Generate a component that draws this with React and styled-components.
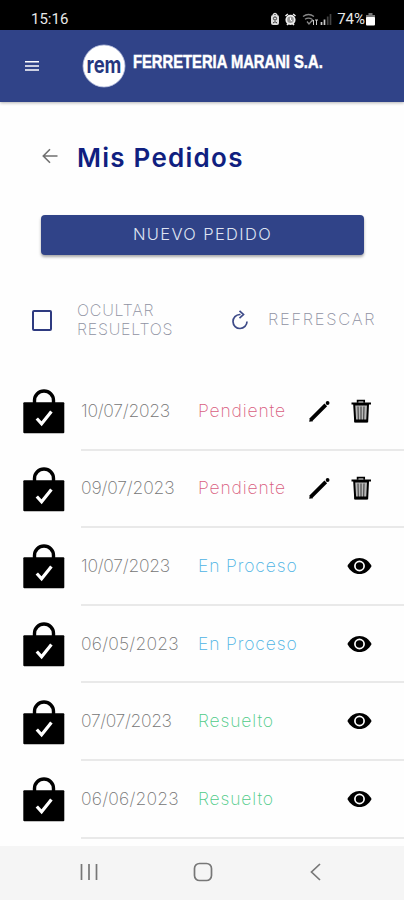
import React from 'react'
import styled, { createGlobalStyle } from 'styled-components'

const orders = [
    { id: 1, date: '10/07/2023', status: 'Pendiente', gap: '-0.25px' },
    { id: 2, date: '09/07/2023', status: 'Pendiente', gap: '-0.15px' },
    { id: 3, date: '10/07/2023', status: 'En Proceso', gap: '-0.25px' },
    { id: 4, date: '06/05/2023', status: 'En Proceso', gap: '0.2px' },
    { id: 5, date: '07/07/2023', status: 'Resuelto', gap: '-0.35px' },
    { id: 6, date: '06/06/2023', status: 'Resuelto', gap: '0.2px' },
]

const statusColors = {
    'Pendiente': '#d95f7e',
    'En Proceso': '#4db3e4',
    'Resuelto': '#4fcb88',
}

const BagIcon = () => (
    <svg width="42" height="45" viewBox="0 0 42 45">
        <path d="M11.5 15V11.5a9.5 9.5 0 0 1 19 0V15" fill="none" stroke="#000" strokeWidth="3.4" />
        <rect x="0.3" y="13.3" width="41" height="31" rx="1" fill="#000" />
        <path d="M13.8 29.5l4.8 5.3 9.8-12.3" fill="none" stroke="#fff" strokeWidth="3.2" />
    </svg>
)

const PencilIcon = () => (
    <svg width="24" height="24" viewBox="0 0 24 24">
        <path d="M3.800 20.800L18.800 5.800" stroke="#000" strokeWidth="3.800" />
        <path d="M2.200 22.800l.6-3.800 3.200 3.200z" fill="#000" />
        <circle cx="20.600" cy="4" r="1.900" fill="#000" />
    </svg>
)

const TrashIcon = () => (
    <svg width="22" height="26" viewBox="0 0 22 26">
        <path d="M7.6 4.8V2.6h6.6v2.2" fill="none" stroke="#000" strokeWidth="1.7" />
        <path d="M1.5 4.5h19.5v2H1.5z" fill="#000" />
        <path d="M4.2 6.5l1 16.8h12L18 6.5z" fill="#b9b9b9" stroke="#000" strokeWidth="2" />
        <path d="M8 8.5l.3 13.5M11 8.5V22M14 8.5L13.7 22" stroke="#333" strokeWidth="1" />
        <path d="M4.4 21.6h13.4l-.2 2.8H4.6z" fill="#000" />
    </svg>
)

const EyeIcon = () => (
    <svg width="25" height="18" viewBox="0 0 25 18">
        <path d="M.4 9C3 3.8 7.5.9 12.5.9S22 3.8 24.6 9C22 14.2 17.5 17.1 12.5 17.1S3 14.2.4 9z" fill="#000" />
        <circle cx="12.5" cy="9" r="4.6" fill="none" stroke="#fff" strokeWidth="1.7" />
    </svg>
)

const App = () => {
    return (
        <>
            <GlobalStyle />
            <Phone>
                <StatusBar>
                    <span>15:16</span>
                    <StatusIcons>
                        <svg width="62" height="14" viewBox="0 0 62 14">
                            <rect x="1" y="3" width="8" height="10" rx="2" fill="#ddd" />
                            <path d="M3 3.2q2-3.6 4 0" fill="none" stroke="#ddd" strokeWidth="1.5" />
                            <circle cx="5" cy="6.5" r="1.6" fill="none" stroke="#333" />
                            <path d="M3 11q2-2.6 4 0" fill="none" stroke="#333" />
                            <circle cx="20.5" cy="7.8" r="4.2" fill="#999" stroke="#eee" strokeWidth="1.8" />
                            <path d="M15.5 4l2.4-2M25.5 4l-2.4-2M17 13l1.4-1.5M24 13l-1.4-1.5" stroke="#eee" strokeWidth="1.6" />
                            <path d="M20.5 5.5V8l1.7 1" fill="none" stroke="#fff" />
                            <path d="M33 4.5q5.5-4 11 0M35 7.3q3.5-2.5 7 0M37 9.5l2 2.5 4-4.5" fill="none" stroke="#888" strokeWidth="1.3" />
                            <path d="M43.5 8v5M46.5 8v5M42 9.5l1.5-1.5M48 8h-3" stroke="#ccc" />
                            <path d="M51.5 10v3M54.5 7.5V13" stroke="#ccc" strokeWidth="1.7" />
                            <path d="M57.7 4.5V13M60.5 2v11" stroke="#444" strokeWidth="1.7" />
                        </svg>
                        <span>74%</span>
                        <svg width="9" height="13" viewBox="0 0 9 13">
                            <path d="M2.5 0h4v2H9v3H0V2h2.5z" fill="#777" />
                            <rect y="4" width="9" height="8.5" rx="1" fill="#fff" />
                        </svg>
                    </StatusIcons>
                </StatusBar>
                <Header>
                    <svg width="16" height="12" viewBox="0 0 16 12">
                        <path d="M1 1.7h14M1 5.9h14M1 10h14" stroke="#fff" strokeWidth="1.5" />
                    </svg>
                    <Logo width="44" height="44" viewBox="0 0 44 44">
                        <circle cx="22" cy="22" r="21" fill="#fff" stroke="#b5bedd" strokeWidth="0.8" />
                        <text transform="translate(22 29) scale(0.8 1)" textAnchor="middle">rem</text>
                    </Logo>
                    <Brand>FERRETERIA MARANI S.A.</Brand>
                </Header>
                <TitleRow>
                    <svg width="16" height="16" viewBox="0 0 16 16">
                        <path d="M15.5 8H1.5M8 1.3L1.3 8 8 14.7" fill="none" stroke="#707070" strokeWidth="1.6" />
                    </svg>
                    <h1>Mis Pedidos</h1>
                </TitleRow>
                <NewOrder>NUEVO PEDIDO</NewOrder>
                <Filters>
                    <Checkbox />
                    <FilterLabel>OCULTAR<br />RESUELTOS</FilterLabel>
                    <Refresh>
                        <svg width="18" height="21" viewBox="0 0 18 21">
                            <path d="M9.5 4.5H8.8A7 7 0 1 0 16 11.5" fill="none" stroke="#3d4a88" strokeWidth="1.7" />
                            <path d="M8.5.8l4 3.7-4 3.7" fill="none" stroke="#3d4a88" strokeWidth="1.7" />
                        </svg>
                        <span>REFRESCAR</span>
                    </Refresh>
                </Filters>
                <List>
                    {orders.map((order) => (
                        <Row key={order.id}>
                            <BagIcon />
                            <RowBody>
                                <OrderDate $gap={order.gap}>{order.date}</OrderDate>
                                <Status $color={statusColors[order.status]}>{order.status}</Status>
                                <Actions>
                                    {order.status === 'Pendiente' ? (
                                        <>
                                            <PencilIcon />
                                            <TrashIcon />
                                        </>
                                    ) : <EyeIcon />}
                                </Actions>
                            </RowBody>
                        </Row>
                    ))}
                </List>
                <NavBar>
                    <svg width="18" height="18" viewBox="0 0 18 18">
                        <path d="M1.5 1v16M9 1v16M16.5 1v16" stroke="#777" strokeWidth="1.7" />
                    </svg>
                    <svg width="20" height="20" viewBox="0 0 20 20">
                        <rect x="1.5" y="1.5" width="17" height="17" rx="5" fill="none" stroke="#777" strokeWidth="1.7" />
                    </svg>
                    <svg width="16" height="18" viewBox="0 0 16 18">
                        <path d="M13 1L4.5 9l8.5 8" fill="none" stroke="#777" strokeWidth="1.7" />
                    </svg>
                </NavBar>
            </Phone>
        </>
    )
}

export default App

const GlobalStyle = createGlobalStyle`
    * {
        box-sizing: border-box;
    }
    body {
        margin: 0;
        background: #fefefe;
        font-family: Inter, sans-serif;
    }
    svg {
        display: block;
        flex-shrink: 0;
    }
`

const Phone = styled.div`
    display: flex;
    flex-direction: column;
    width: 404px;
    height: 900px;
    overflow: hidden;
`

const StatusBar = styled.div`
    display: flex;
    justify-content: space-between;
    align-items: center;
    height: 30px;
    padding: 8px 29px 0 31px;
    background: #000;
    color: #e8e8e8;
    font-family: Roboto, sans-serif;
    font-size: 15px;
`

const StatusIcons = styled.div`
    display: flex;
    align-items: center;

    span {
        margin: 0 1px 0 5px;
    }
`

const Header = styled.header`
    display: flex;
    align-items: center;
    height: 72px;
    padding-left: 24px;
    background: #304388;
    box-shadow: 0 1px 3px rgba(0, 0, 0, 0.3);
`

const Logo = styled.svg`
    margin-left: 42px;
    overflow: visible;

    text {
        font-family: Inter, sans-serif;
        font-size: 23px;
        font-weight: 700;
        fill: #26377f;
    }
`

const Brand = styled.div`
    margin: -9px 0 0 7px;
    color: #fff;
    font-family: 'Liberation Sans', sans-serif;
    font-size: 19px;
    font-weight: 700;
    white-space: nowrap;
    transform: scaleX(0.777);
    transform-origin: left center;
    -webkit-text-stroke: 0.5px #fff;
`

const TitleRow = styled.div`
    display: flex;
    align-items: center;
    height: 32px;
    margin-top: 39px;
    padding-left: 42px;

    h1 {
        margin: 0 0 0 19px;
        color: #101f80;
        font-size: 26px;
        font-weight: 600;
        letter-spacing: 1.25px;
    }
    svg {
        margin-top: -2px;
    }
`

const NewOrder = styled.button`
    height: 40px;
    margin: 42px 40px 0 41px;
    padding: 0 0 2px;
    border: 0;
    border-radius: 4px;
    background: #304388;
    box-shadow: 0 2px 3px rgba(0, 0, 0, 0.35);
    color: #dfe3f2;
    font-family: inherit;
    font-size: 16.5px;
    font-weight: 300;
    letter-spacing: 1.35px;
`

const Filters = styled.div`
    display: flex;
    align-items: center;
    height: 44px;
    margin-top: 43px;
    padding-left: 32px;
    color: #8f92a2;
    font-size: 16px;
    font-weight: 250;
`

const Checkbox = styled.div`
    width: 20px;
    height: 21px;
    border: 2px solid #2e3a80;
    border-radius: 2px;
`

const FilterLabel = styled.div`
    width: 130px;
    margin-left: 25px;
    padding-bottom: 1px;
    line-height: 18.5px;
    letter-spacing: 0.75px;
`

const Refresh = styled.div`
    display: flex;
    align-items: center;
    margin-left: 24px;

    span {
        margin: -2px 0 0 19px;
        font-size: 16.5px;
        letter-spacing: 1.7px;
    }
`

const List = styled.div`
    display: flex;
    flex-direction: column;
    flex-shrink: 0;
    margin-top: 31px;
`

const Row = styled.div`
    display: flex;
    align-items: center;
    height: 77.6px;
    padding-left: 23px;
`

const RowBody = styled.div`
    display: flex;
    align-items: center;
    flex: 1;
    height: 100%;
    margin-left: 16px;
    border-bottom: 2px solid #e9e9e9;
    font-size: 17.5px;
    font-weight: 250;
`

const OrderDate = styled.span`
    width: 117px;
    padding-bottom: 1px;
    color: #757575;
    letter-spacing: ${(props) => props.$gap};
    white-space: nowrap;
`

const Status = styled.span`
    padding-bottom: 1px;
    color: ${(props) => props.$color};
    letter-spacing: 0.85px;
    white-space: nowrap;
`

const Actions = styled.div`
    display: flex;
    align-items: center;
    gap: 19px;
    margin-left: auto;
    padding-right: 32px;
`

const NavBar = styled.nav`
    display: flex;
    align-items: center;
    justify-content: space-between;
    flex-shrink: 0;
    height: 54px;
    margin-top: auto;
    padding: 0 81px 2px 80px;
    background: #f5f5f5;
`
